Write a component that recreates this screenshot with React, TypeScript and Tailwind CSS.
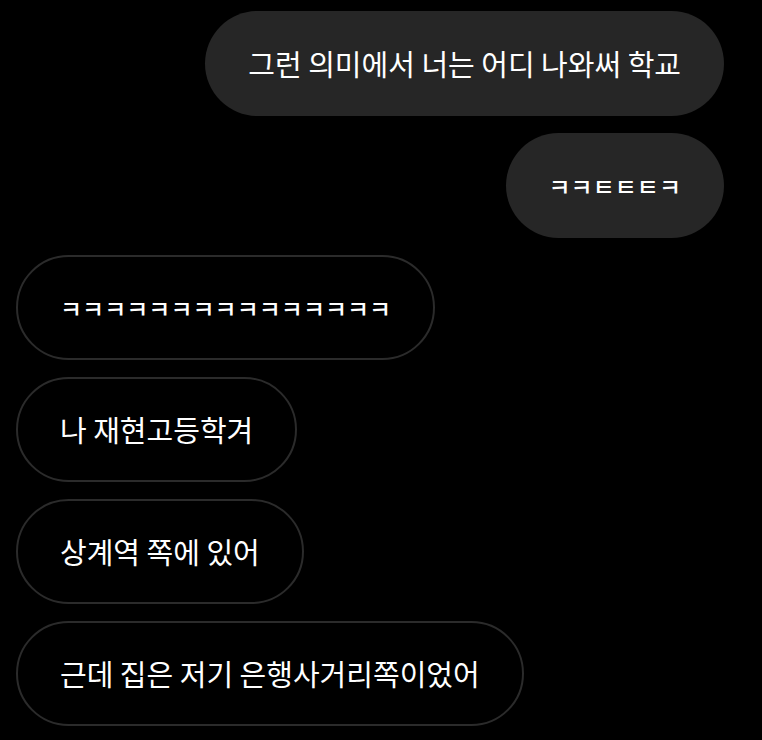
import React from 'react';

type Msg = { text: string; mine: boolean; jamo?: boolean };

const messages: Msg[] = [
    { text: '그런 의미에서 너는 어디 나와써 학교', mine: true },
    { text: 'ㅋㅋㅌㅌㅌㅋ', mine: true, jamo: true },
    { text: 'ㅋㅋㅋㅋㅋㅋㅋㅋㅋㅋㅋㅋㅋㅋㅋ', mine: false, jamo: true },
    { text: '나 재현고등학겨', mine: false },
    { text: '상계역 쪽에 있어', mine: false },
    { text: '근데 집은 저기 은행사거리쪽이었어', mine: false },
];

const App: React.FC = () => (
    <div className="min-h-[740px] w-full bg-black font-['Noto_Sans_CJK_KR',sans-serif] text-white">
        <div className="flex flex-col gap-[17px] pt-[11px] pl-4 pr-[38px]">
            {messages.map((m, i) => (
                <div
                    key={i}
                    className={
                        m.mine
                            ? 'self-end h-[105px] flex items-center px-[43px] rounded-full bg-[#262626]'
                            : 'self-start h-[105px] flex items-center px-[42px] rounded-full border-2 border-[#2b2b2b]'
                    }
                >
                    <span
                        className={
                            m.jamo
                                ? 'text-[24px] leading-none font-medium whitespace-nowrap'
                                : 'text-[29px] leading-none whitespace-nowrap'
                        }
                    >
                        {m.text}
                    </span>
                </div>
            ))}
        </div>
    </div>
);

export default App;
